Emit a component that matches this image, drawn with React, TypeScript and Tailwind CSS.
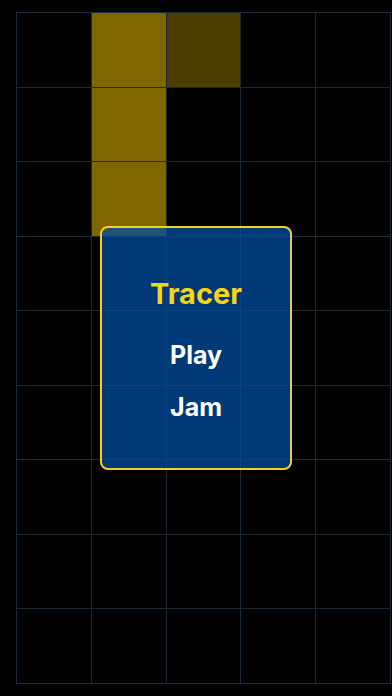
import React from "react";

const COLS = 5;
const ROWS = 9;

// filled cells: key "row-col" -> colour class
const filled: Record<string, string> = {
  "0-1": "bg-[#806600]",
  "1-1": "bg-[#806600]",
  "2-1": "bg-[#806600]",
  "0-2": "bg-[#4d3d00]",
};

export default function App() {
  const cells = [];
  for (let r = 0; r < ROWS; r++) {
    for (let c = 0; c < COLS; c++) {
      const key = `${r}-${c}`;
      cells.push(
        <div
          key={key}
          className={`border-r border-b border-[#1b2a3b] ${filled[key] ?? "bg-black"}`}
        />
      );
    }
  }

  return (
    <div
      className="relative h-[696px] w-[392px] overflow-hidden bg-black pt-[12px] pl-[16px]"
      style={{ fontFamily: "Inter, 'Noto Sans', sans-serif" }}
    >
      <div className="grid h-[672px] w-[375px] grid-cols-5 grid-rows-9 border-l border-t border-[#1b2a3b]">
        {cells}
      </div>

      <div className="absolute left-[100px] top-[226px] flex h-[244px] w-[192px] flex-col items-center rounded-[8px] border-2 border-[#f2d21c] bg-[#004c9f]/75 pt-[48px]">
        <h1 className="text-[29px] font-bold leading-[36px] text-[#f7d416]">Tracer</h1>
        <button className="mt-[27px] text-[25px] font-bold leading-[32px] text-white">Play</button>
        <button className="mt-[20px] text-[25px] font-bold leading-[32px] text-white">Jam</button>
      </div>
    </div>
  );
}
